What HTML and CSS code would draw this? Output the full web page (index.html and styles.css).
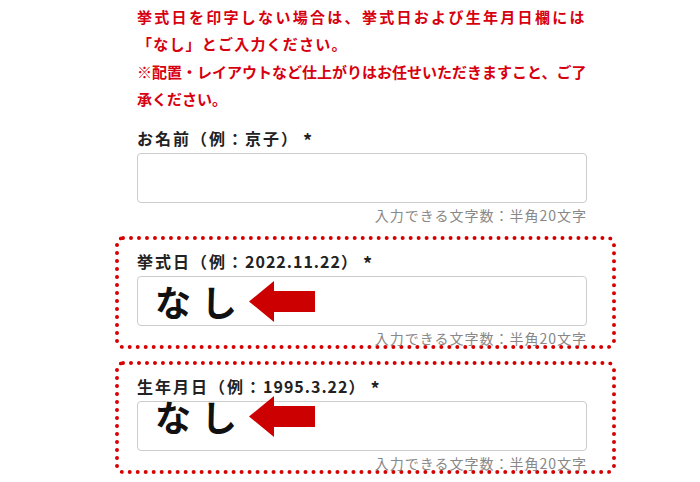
FILE: index.html
```html
<!DOCTYPE html>
<html>
<head>
    <title>ご入力フォーム</title>
    <link rel="stylesheet" href="styles.css">
</head>
<body>
    <div class="form">
        <div class="notice">
            <p class="notice-wide"><span class="first-line">挙式日を印字しない場合は、挙式日および生年月日欄には</span><br>「なし」とご入力ください。</p>
            <p>※配置・レイアウトなど仕上がりはお任せいただきますこと、ご了承ください。</p>
        </div>

        <div class="field">
            <div class="label">お名前（例：京子）<span class="req">*</span></div>
            <div class="input"></div>
            <div class="hint">入力できる文字数：半角20文字</div>
        </div>

        <!-- 赤い点線の囲み -->
        <div class="field mark">
            <div class="label">挙式日（例：<span class="num">2022.11.22</span>）<span class="req">*</span></div>
            <div class="input">
                <div class="note">
                    <span class="nashi">なし</span>
                    <svg class="arrow" width="66" height="41" viewBox="0 0 66 41">
                        <polygon points="0,20.5 25,0 25,10 66,10 66,31 25,31 25,41" fill="#cc0000"/>
                    </svg>
                </div>
            </div>
            <div class="hint">入力できる文字数：半角20文字</div>
        </div>

        <div class="field mark">
            <div class="label">生年月日（例：<span class="num">1995.3.22</span>）<span class="req">*</span></div>
            <div class="input">
                <div class="note note-up">
                    <span class="nashi">なし</span>
                    <svg class="arrow" width="66" height="41" viewBox="0 0 66 41">
                        <polygon points="0,20.5 25,0 25,10 66,10 66,31 25,31 25,41" fill="#cc0000"/>
                    </svg>
                </div>
            </div>
            <div class="hint">入力できる文字数：半角20文字</div>
        </div>
    </div>
</body>
</html>
```

FILE: styles.css
```css
body {
    margin: 0;
    background-color: #fff;
    font-family: "Noto Sans CJK JP", "Noto Sans", sans-serif;
    color: #333;
}

/* Form column */
.form {
    width: 450px;
    margin-left: 137px;
    padding-top: 3px;
}

/* Red notice text */
.notice {
    color: #d7000f;
    font-size: 15px;
    font-weight: bold;
    line-height: 27.3px;
}

.notice p {
    margin: 0;
}

.notice-wide {
    letter-spacing: 1.2px;
}

.first-line {
    letter-spacing: 2.3px;
}

/* Fields */
.field {
    margin-top: 13px;
}

.label {
    font-size: 16px;
    font-weight: bold;
    line-height: 24px;
    letter-spacing: 2px;
    color: #222;
}

.label .num {
    letter-spacing: 1px;
}

.req {
    font-size: 18px;
    margin-left: 4px;
    position: relative;
    top: 3px;
}

.input {
    height: 50px;
    box-sizing: border-box;
    margin-top: 3px;
    border: 1px solid #ccc;
    border-radius: 4px;
    background-color: #fff;
}

.hint {
    margin-top: 3px;
    text-align: right;
    font-size: 14px;
    line-height: 18px;
    letter-spacing: 1px;
    color: #888;
}

/* Dotted red frame around a field */
.mark {
    margin: 12px -29px 0 -22px;
    padding: 8px 25px 0 18px;
    border: 4px dotted #d60000;
    border-radius: 8px;
}

.mark .hint {
    margin-bottom: -2px;
}

/* "なし" + arrow inside the box */
.note {
    display: flex;
    align-items: center;
    height: 100%;
    padding-left: 17px;
}

.note-up {
    margin-top: -10px;
}

.nashi {
    font-size: 36px;
    font-weight: bold;
    letter-spacing: 10px;
    color: #111;
    line-height: 30px;
}

.arrow {
    margin-left: 2px;
    display: block;
}
```
